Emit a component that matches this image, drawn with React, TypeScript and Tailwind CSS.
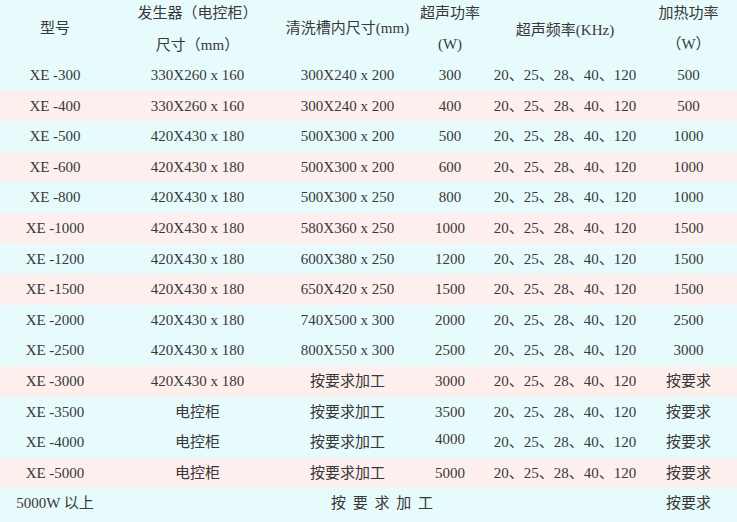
const CYAN = "bg-[#e8fbfc]";
const PINK = "bg-[#fdefee]";

type Row = {
  model: string;
  gen: string;
  tank: string;
  power: string;
  heat: string;
  pink: boolean;
};

const rows: Row[] = [
  { model: "XE -300", gen: "330X260 x 160", tank: "300X240 x 200", power: "300", heat: "500", pink: false },
  { model: "XE -400", gen: "330X260 x 160", tank: "300X240 x 200", power: "400", heat: "500", pink: true },
  { model: "XE -500", gen: "420X430 x 180", tank: "500X300 x 200", power: "500", heat: "1000", pink: false },
  { model: "XE -600", gen: "420X430 x 180", tank: "500X300 x 200", power: "600", heat: "1000", pink: true },
  { model: "XE -800", gen: "420X430 x 180", tank: "500X300 x 250", power: "800", heat: "1000", pink: false },
  { model: "XE -1000", gen: "420X430 x 180", tank: "580X360 x 250", power: "1000", heat: "1500", pink: true },
  { model: "XE -1200", gen: "420X430 x 180", tank: "600X380 x 250", power: "1200", heat: "1500", pink: false },
  { model: "XE -1500", gen: "420X430 x 180", tank: "650X420 x 250", power: "1500", heat: "1500", pink: true },
  { model: "XE -2000", gen: "420X430 x 180", tank: "740X500 x 300", power: "2000", heat: "2500", pink: false },
  { model: "XE -2500", gen: "420X430 x 180", tank: "800X550 x 300", power: "2500", heat: "3000", pink: false },
  { model: "XE -3000", gen: "420X430 x 180", tank: "按要求加工", power: "3000", heat: "按要求", pink: true },
  { model: "XE -3500", gen: "电控柜", tank: "按要求加工", power: "3500", heat: "按要求", pink: false },
  { model: "XE -4000", gen: "电控柜", tank: "按要求加工", power: "4000", heat: "按要求", pink: false },
  { model: "XE -5000", gen: "电控柜", tank: "按要求加工", power: "5000", heat: "按要求", pink: true },
];

const FREQ = "20、25、28、40、120";

export default function App() {
  return (
    <div
      className={`w-[737px] h-[522px] ${CYAN} text-[#383838] text-[15px] overflow-hidden`}
      style={{ fontFamily: '"Liberation Serif", "Noto Sans CJK SC", serif' }}
    >
      <table className="w-full table-fixed border-collapse text-center">
        <colgroup>
          <col className="w-[110px]" />
          <col className="w-[175px]" />
          <col className="w-[125px]" />
          <col className="w-[80px]" />
          <col className="w-[150px]" />
          <col className="w-[97px]" />
        </colgroup>
        <thead>
          <tr className={`h-[60px] ${CYAN}`}>
            <th className="align-top font-normal pt-[15px] leading-[26px]">型号</th>
            <th className="align-top font-normal leading-[26px]">
              <div>发生器（电控柜）</div>
              <div className="mt-[6px]">尺寸（mm）</div>
            </th>
            <th className="align-top font-normal pt-[15px] leading-[26px] whitespace-nowrap">清洗槽内尺寸(mm)</th>
            <th className="align-top font-normal leading-[26px]">
              <div>超声功率</div>
              <div className="mt-[5px]">(W)</div>
            </th>
            <th className="align-top font-normal pt-[17px] leading-[26px]">超声频率(KHz)</th>
            <th className="align-top font-normal leading-[26px]">
              <div>加热功率</div>
              <div className="mt-[5px]">（W）</div>
            </th>
          </tr>
        </thead>
        <tbody>
          {rows.map((r) => (
            <tr key={r.model} className={`h-[30.6px] ${r.pink ? PINK : CYAN}`}>
              <td className="p-0">{r.model}</td>
              <td className="p-0">{r.gen}</td>
              <td className="p-0">{r.tank}</td>
              <td className="p-0">
                {/* this one sits a bit higher in the original */}
                <span className={r.power === "4000" ? "relative -top-[3px]" : ""}>{r.power}</span>
              </td>
              <td className="p-0 whitespace-nowrap">{FREQ}</td>
              <td className="p-0">{r.heat}</td>
            </tr>
          ))}
          <tr className={`h-[30.6px] ${CYAN}`}>
            <td className="p-0">5000W 以上</td>
            <td className="p-0 pl-[14px]" colSpan={4}>
              <span className="tracking-[0.45em] pl-[0.45em]">按要求加工</span>
            </td>
            <td className="p-0">按要求</td>
          </tr>
        </tbody>
      </table>
    </div>
  );
}
